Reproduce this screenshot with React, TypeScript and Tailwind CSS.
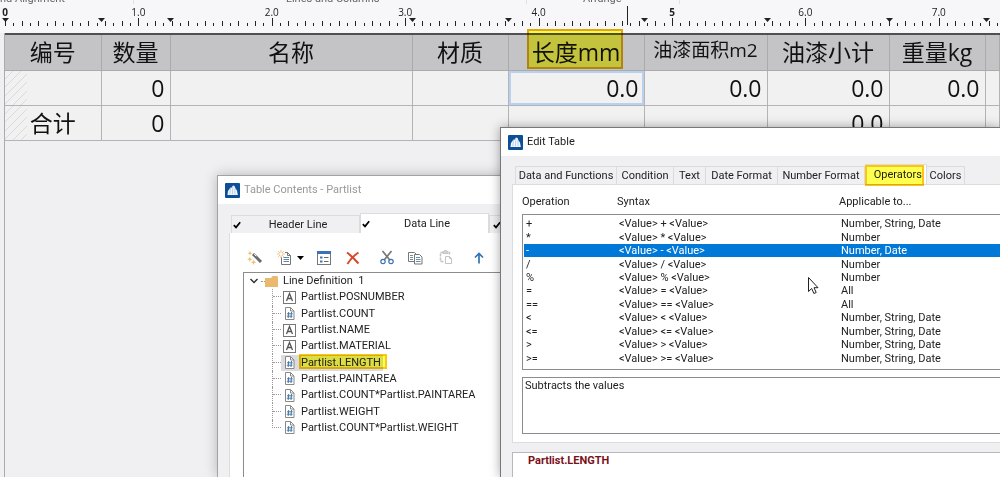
import React, { useState } from 'react';

const COLUMN_STOPS = [5, 101, 170, 412, 508, 644, 767, 889, 986];
const INCH = 133.4;

const headers = ['编号', '数量', '名称', '材质', '长度mm', '油漆面积m2', '油漆小计', '重量kg', ''];
const dataRow = ['', '0', '', '', '0.0', '0.0', '0.0', '0.0', ''];
const totalRow = ['合计', '0', '', '', '', '', '0.0', '', ''];

const fields = [
  { name: 'Partlist.POSNUMBER', type: 'text' },
  { name: 'Partlist.COUNT', type: 'number' },
  { name: 'Partlist.NAME', type: 'text' },
  { name: 'Partlist.MATERIAL', type: 'text' },
  { name: 'Partlist.LENGTH', type: 'number' },
  { name: 'Partlist.PAINTAREA', type: 'number' },
  { name: 'Partlist.COUNT*Partlist.PAINTAREA', type: 'number' },
  { name: 'Partlist.WEIGHT', type: 'number' },
  { name: 'Partlist.COUNT*Partlist.WEIGHT', type: 'number' },
];

const operators = [
  { op: '+', target: 'Number, String, Date' },
  { op: '*', target: 'Number' },
  { op: '-', target: 'Number, Date' },
  { op: '/', target: 'Number' },
  { op: '%', target: 'Number' },
  { op: '=', target: 'All' },
  { op: '==', target: 'All' },
  { op: '<', target: 'Number, String, Date' },
  { op: '<=', target: 'Number, String, Date' },
  { op: '>', target: 'Number, String, Date' },
  { op: '>=', target: 'Number, String, Date' },
];

const editTabs = [
  { label: 'Data and Functions', width: 'w-[102px]' },
  { label: 'Condition', width: 'w-[57px]' },
  { label: 'Text', width: 'w-8' },
  { label: 'Date Format', width: 'w-[72px]' },
  { label: 'Number Format', width: 'w-[87px]' },
  { label: 'Operators', width: 'w-[62px]' },
  { label: 'Colors', width: 'w-[38px]' },
];

const AppIcon = () => (
  <svg width="15" height="15" viewBox="0 0 15 15" className="shrink-0">
    <rect width="15" height="15" rx="1" fill="#0d4f96" />
    <path d="M2.500 12 3 8l2.500-3.500 1 .3L8 2.500l1.500.5 1 2.500 1.500 2 .8 4.500z" fill="#f4f8fc" />
    <path d="M5.500 5 4.800 11.500M8 3.500 7.300 11.500M10 5.500v6" stroke="#9dbbe0" strokeWidth=".7" fill="none" />
  </svg>
);

const CheckMark = () => (
  <svg width="8" height="8" viewBox="0 0 8 8" className="shrink-0">
    <path d="M.8 4.200 3 6.400 7.200 1.300" fill="none" stroke="#000" strokeWidth="1.700" />
  </svg>
);

const WandIcon = () => (
  <svg width="16" height="16" viewBox="0 0 16 16">
    <path d="m6 4 8 8" stroke="#6b6b6b" strokeWidth="3" />
    <path d="m7.200 4.200 2 2" stroke="#fff" strokeWidth="1" />
    <path d="m3 .8.7 1.700 1.700.7-1.700.7L3 5.600l-.7-1.700-1.700-.7 1.700-.7zM2.800 6.500l.8 1.900 1.900.8-1.900.8-.8 1.900-.8-1.900L.1 9.200 2 8.400zM6.500 9.600l.8 1.900 1.900.8-1.900.8-.8 1.900-.8-1.900-1.900-.8 1.900-.8z" fill="#efc070" />
  </svg>
);

const NewIcon = () => (
  <svg width="16" height="16" viewBox="0 0 16 16">
    <path d="M4.500 7v7.500h9V5.500l-3-3H8" fill="#fff" stroke="#777" />
    <path d="M10.500 2.500v3h3" fill="none" stroke="#777" />
    <path d="M6.500 7.500H12M6.500 9.500H12M6.500 11.500H12" stroke="#5b89a0" />
    <path d="M4 0v8M0 4h8M1.200 1.200l5.600 5.600M6.800 1.200 1.200 6.800" stroke="#edc27c" />
    <circle cx="4" cy="4" r="1.500" fill="#fff" />
  </svg>
);

const PropertiesIcon = () => (
  <svg width="14" height="14" viewBox="0 0 14 14">
    <rect x=".5" y=".5" width="13" height="13" fill="#fff" stroke="#777" />
    <rect width="14" height="3" fill="#3d72b4" />
    <path d="M3 5.500h2.500v2H3zM3 9.500h2.500v2H3z" fill="#4a78a8" />
    <path d="M7 6.500h4.500M7 10.500h4.500" stroke="#666" />
  </svg>
);

const DeleteIcon = () => (
  <svg width="14" height="14" viewBox="0 0 14 14">
    <path d="M1 1.500c4 3 8 7 11.500 11M12.500 1.500C8 4.500 4 8.500 1.500 13" fill="none" stroke="#d8492b" strokeWidth="2" />
  </svg>
);

const CutIcon = () => (
  <svg width="14" height="15" viewBox="0 0 14 15" fill="none">
    <path d="M2.500 1 9.800 10M11.500 1 4.200 10" stroke="#777" strokeWidth="1.700" />
    <circle cx="3" cy="11.500" r="2.200" stroke="#3d72b4" strokeWidth="1.200" />
    <circle cx="11" cy="11.500" r="2.200" stroke="#3d72b4" strokeWidth="1.200" />
  </svg>
);

const CopyIcon = () => (
  <svg width="15" height="14" viewBox="0 0 15 14">
    <path d="M.5 1.500h6l2 2v7h-8z" fill="#fff" stroke="#777" />
    <path d="M2 4.500h3M2 6.500h3M2 8.500h3" stroke="#6b8fa5" />
    <path d="M6.500 3.500h5l2.500 2.500v7H6.500z" fill="#fff" stroke="#777" />
    <path d="M8 6.500h4M8 8.500h4.500M8 10.500h4.500" stroke="#6b8fa5" />
  </svg>
);

const PasteIcon = () => (
  <svg width="14" height="15" viewBox="0 0 14 15" fill="none" stroke="#c4c4c4">
    <path d="M4.500 11.500h-3v-9h9v2" strokeWidth="1.500" strokeDasharray="3 1" />
    <path d="M4 3.500V1.500h1.500V.5h2v1H9v2z" fill="#d4d4d4" />
    <path d="M6.500 6.500h4l2 2v5h-6zM10.500 6.500v2h2" fill="#fff" />
  </svg>
);

const UpIcon = () => (
  <svg width="10" height="12" viewBox="0 0 10 12">
    <path d="M5 11.500V1.500M1 5.500l4-4 4 4" fill="none" stroke="#2f74b5" strokeWidth="1.700" />
  </svg>
);

const TextFieldIcon = () => (
  <svg width="13" height="13" viewBox="0 0 13 13" fill="none">
    <rect x=".5" y=".5" width="12" height="12" fill="#fff" stroke="#777" />
    <path d="m3.500 10 3-7.500 3 7.500M4.500 7.500h4" stroke="#555" strokeWidth="1.300" />
  </svg>
);

const NumberFieldIcon = () => (
  <svg width="13" height="13" viewBox="0 0 13 13" fill="none">
    <path d="M2.500.5h5l3.500 3.500v8.500H2.500z" fill="#fff" stroke="#888" />
    <path d="M7.500.5V4H11" stroke="#888" />
    <path d="M5.700 5 5.200 11M8.500 5 8 11M4 6.800h5.700M3.800 9.200h5.700" stroke="#4679a8" />
  </svg>
);

const Ruler = () => {
  const ticks = Array.from({ length: 120 }, (_, i) => i);
  const labels = ['0', '1.0', '2.0', '3.0', '4.0', '5', '6.0', '7.0'];
  return (
    <svg className="block h-7 w-full font-['Open_Sans',sans-serif] text-[10px]" fill="#222">
      {ticks.map(i => {
        const height = i % 16 === 0 ? 8 : i % 2 === 0 ? 5 : 3;
        return <rect key={i} x={Math.round(5 + (i * INCH) / 16)} y={22 - height} width="1" height={height} />;
      })}
      {COLUMN_STOPS.map(x => (
        <path key={x} d={`M${x - 3} 14h7l-3.500 4z`} />
      ))}
      <rect x="627" y="2" width="1" height="19" />
      {labels.map((label, i) => (
        <text key={label} x={5 + i * INCH} y="12" textAnchor="middle" fontWeight={label.includes('.') ? 400 : 700}>
          {label}
        </text>
      ))}
    </svg>
  );
};

const Sheet = () => (
  <div className="ml-[4px] flex-1 border-l border-[#ababad] font-['Open_Sans','Noto_Sans_CJK_SC',sans-serif]">
    <table className="w-full table-fixed border-collapse border-t-2 border-[#505052] text-[23px] leading-8 text-[#111]">
      <colgroup>
        <col className="w-24" />
        <col className="w-[69px]" />
        <col className="w-[242px]" />
        <col className="w-24" />
        <col className="w-[136px]" />
        <col className="w-[123px]" />
        <col className="w-[122px]" />
        <col className="w-24" />
        <col />
      </colgroup>
      <thead>
        <tr className="h-9 bg-[#c4c3c6]">
          {headers.map((text, i) => (
            <th key={i} className="relative border-r border-b border-[#ababad] p-0 text-center font-normal">
              {text === '油漆面积m2' ? <span className="block h-8 text-[19px] leading-7">{text}</span> : text}
              {text === '长度mm' && (
                <span className="absolute -top-[6px] left-[18px] h-10 w-24 border-2 border-[#e8ac10] bg-[#ffff50] mix-blend-multiply" />
              )}
            </th>
          ))}
        </tr>
      </thead>
      <tbody>
        {[dataRow, totalRow].map((row, r) => (
          <tr key={r} className="h-[35px] bg-[#f1f1f2]">
            {row.map((text, i) => (
              <td
                key={i}
                className={`border-r border-b border-[#b4b4b6] py-0 ${
                  i === 0
                    ? 'bg-[repeating-linear-gradient(135deg,#f1f1f2_0px,#f1f1f2_5px,#dadadc_5px,#dadadc_6px)] bg-[length:22px_100%] bg-no-repeat px-0 text-center'
                    : 'pr-[5px] text-right'
                } ${r === 0 && i === 4 ? 'shadow-[inset_0_0_0_2px_#b9d0ee]' : ''}`}
              >
                {text}
              </td>
            ))}
          </tr>
        ))}
      </tbody>
    </table>
  </div>
);

const TitleBar = ({ title, muted }: { title: string; muted?: boolean }) => (
  <header className={`flex h-7 shrink-0 items-center gap-1 bg-white px-[7px] ${muted ? 'text-[#999]' : 'text-[#222]'}`}>
    <AppIcon />
    <h2>{title}</h2>
  </header>
);

const ContentsDialog = () => (
  <section className="absolute top-[175px] right-[300px] bottom-0 left-[217px] flex flex-col overflow-hidden border border-b-0 border-[#a2a2a4] bg-[#f0eff1] shadow-[0_0_12px_rgba(0,0,0,0.25)]">
    <TitleBar title="Table Contents - Partlist" muted />
    <div role="tablist" className="mt-[9px] ml-[13px] flex h-5 items-end">
      <button role="tab" aria-selected="false" className="flex h-[18px] w-[129px] items-center border border-b-0 border-[#dcdcdd] pl-px">
        <CheckMark />
        <span className="flex-1 pr-1">Header Line</span>
      </button>
      <button role="tab" aria-selected="true" className="flex h-5 w-[129px] items-center border border-b-0 border-[#dcdcdd] bg-white pl-px">
        <CheckMark />
        <span className="flex-1 pr-1">Data Line</span>
      </button>
      <button role="tab" aria-selected="false" className="flex h-[18px] w-[129px] items-center border border-b-0 border-[#dcdcdd] pl-[3px]">
        <CheckMark />
      </button>
    </div>
    <div className="ml-[11px] flex flex-1 flex-col border-l border-[#dcdcdd] bg-white pl-[13px]">
      <div className="flex h-[39px] items-center pt-[10px] pl-1">
        <button aria-label="Wizard" className="w-[30px]"><WandIcon /></button>
        <button aria-label="New" className="flex w-10 items-center gap-1">
          <NewIcon />
          <svg width="7" height="4" viewBox="0 0 7 4"><path d="M0 0h7L3.500 4z" /></svg>
        </button>
        <button aria-label="Properties" className="w-[29px]"><PropertiesIcon /></button>
        <button aria-label="Delete" className="w-[34px]"><DeleteIcon /></button>
        <button aria-label="Cut" className="w-7"><CutIcon /></button>
        <button aria-label="Copy" className="w-[31px]"><CopyIcon /></button>
        <button aria-label="Paste" className="w-[35px]"><PasteIcon /></button>
        <button aria-label="Move up"><UpIcon /></button>
      </div>
      <div className="flex-1 border-t border-l border-[#8c8c8e] pl-[5px]">
        <ul role="tree" className="grid h-[163px] auto-rows-fr">
          <li role="treeitem" className="flex items-center">
            <svg width="10" height="8" viewBox="0 0 10 8" fill="none"><path d="m1.500 2 3.500 3.500L8.500 2" stroke="#333" strokeWidth="1.500" /></svg>
            <span className="ml-[2px] w-1 border-t border-dotted border-[#999]" />
            <svg width="13" height="12" viewBox="0 0 13 12"><path d="M0 3h6l1.500-2H12l1 1v10H0z" fill="#ebb870" /></svg>
            <span className="pl-[5px] whitespace-pre">Line Definition  1</span>
          </li>
          {fields.map((field, i) => (
            <li key={field.name} role="treeitem" className="flex items-center pl-[23px]">
              <span className={`relative w-[9px] self-stretch border-dotted border-[#999] ${i < fields.length - 1 ? 'border-l' : ''}`}>
                <span className={`absolute top-0 left-0 h-1/2 w-full border-b border-dotted border-[#999] ${i === fields.length - 1 ? 'border-l' : ''}`} />
              </span>
              <span className={`relative flex h-4 items-center gap-[5px] pr-[2px] pl-[2px] ${field.name === 'Partlist.LENGTH' ? 'bg-[#dcdcde]' : ''}`}>
                {field.type === 'text' ? <TextFieldIcon /> : <NumberFieldIcon />}
                <span>{field.name}</span>
                {field.name === 'Partlist.LENGTH' && (
                  <span className="absolute -top-px -right-1 left-[18px] h-[15px] border-2 border-[#fac810] bg-[#ffff50] mix-blend-multiply" />
                )}
              </span>
            </li>
          ))}
        </ul>
      </div>
    </div>
  </section>
);

const EditDialog = () => {
  const [selected, setSelected] = useState('-');

  return (
    <section className="absolute top-[127px] right-0 bottom-0 left-[500px] flex flex-col overflow-hidden border-t border-l border-[#77777a] bg-[#f0eff1] shadow-[0_0_10px_rgba(0,0,0,0.35)]">
      <TitleBar title="Edit Table" />
      <div role="tablist" className="mt-2 ml-[14px] flex h-5 items-end">
        {editTabs.map(tab => {
          const active = tab.label === 'Operators';
          return (
            <button
              key={tab.label}
              role="tab"
              aria-selected={active}
              className={`relative shrink-0 border border-b-0 border-l-0 border-[#dcdcdd] whitespace-nowrap first:border-l ${tab.width} ${active ? 'h-5 bg-white' : 'h-[18px]'}`}
            >
              <span className={`flex h-full items-center ${active ? 'justify-end pr-1' : 'justify-center'}`}>{tab.label}</span>
              {active && <span className="absolute top-0 left-0 h-[21px] w-[59px] border-2 border-[#fcc419] bg-[#ffff50] mix-blend-multiply" />}
            </button>
          );
        })}
      </div>
      <div className="ml-[11px] flex h-[259px] shrink-0 flex-col border border-r-0 border-[#dcdcdd] bg-white pl-[9px]">
        <div className="grid h-[29px] grid-cols-[95px_222px_1fr] items-center pt-1">
          <span>Operation</span>
          <span>Syntax</span>
          <span>Applicable to...</span>
        </div>
        <div className="h-[156px] border border-r-0 border-[#8c8c8e] pt-[2px] pl-px">
          <table className="h-[148px] w-full table-fixed leading-[13px]">
            <colgroup>
              <col className="w-[95px]" />
              <col className="w-[222px]" />
              <col />
            </colgroup>
            <tbody>
              {operators.map(({ op, target }) => (
                <tr
                  key={op}
                  onClick={() => setSelected(op)}
                  className={op === selected ? 'bg-[#0078d7] text-white' : ''}
                >
                  <td className="p-0 pl-[2px]">{op}</td>
                  <td className="p-0">{`<Value> ${op} <Value>`}</td>
                  <td className="p-0">{target}</td>
                </tr>
              ))}
            </tbody>
          </table>
        </div>
        <textarea
          aria-label="Description"
          readOnly
          value="Subtracts the values"
          className="mt-[7px] h-[57px] w-full resize-none border border-r-0 border-[#8c8c8e] px-[2px] py-0 outline-none"
        />
      </div>
      <div className="mt-[9px] ml-[11px] flex-1 border-t border-l border-[#b8b8ba] bg-white pl-[15px] font-bold text-[#7a1018]">
        <p>Partlist.LENGTH</p>
      </div>
    </section>
  );
};

const App: React.FC = () => (
  <main className="relative flex min-h-screen flex-col overflow-hidden bg-[#f0f0f2] font-['Roboto',sans-serif] text-[11px] leading-4 text-[#222]">
    {/* Lower edge of the ribbon group captions */}
    <div className="flex h-1 items-end overflow-hidden bg-[#f7f7f9] leading-[10px] text-[#666]">
      <span className="w-[134px] shrink-0 border-r border-[#e0e0e2]">nd Alignment</span>
      <span className="w-[393px] shrink-0 border-r border-[#e0e0e2] pl-[152px]">Lines and Columns</span>
      <span className="w-[153px] shrink-0 border-r border-[#e0e0e2] pl-14">Arrange</span>
    </div>
    <div className="h-[29px] bg-[#f7f7f9]">
      <Ruler />
    </div>
    <Sheet />
    <ContentsDialog />
    <EditDialog />
    <svg width="12" height="18" viewBox="0 0 12 18" className="pointer-events-none absolute top-[277px] left-[808px]">
      <path d="M.5.5v14l3.200-3 2.200 5 2.300-1-2.200-4.800H10z" fill="#fff" stroke="#222" />
    </svg>
  </main>
);

export default App;
